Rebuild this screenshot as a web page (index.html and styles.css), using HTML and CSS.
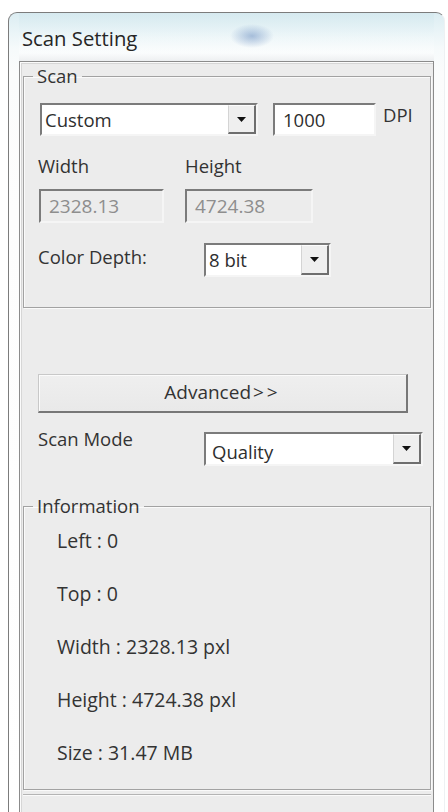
FILE: index.html
```html
<!DOCTYPE html>
<html lang="en">
<head>
<meta charset="utf-8">
<title>Scan Setting</title>
<link rel="stylesheet" href="styles.css">
</head>
<body>
<div class="window">
  <div class="titlebar"><span class="title">Scan Setting</span></div>
  <div class="client">
    <fieldset class="group scan">
      <legend>Scan</legend>
      <div class="row r-preset">
        <div class="combo c-preset">
          <span class="val">Custom</span>
          <span class="drop"><svg width="9" height="5" viewBox="0 0 9 5"><path d="M0 0h9L4.5 5z" fill="#111"/></svg></span>
        </div>
        <div class="field f-dpi">1000</div>
        <span class="unit">DPI</span>
      </div>
      <div class="row r-labels">
        <span class="lbl l-w">Width</span>
        <span class="lbl">Height</span>
      </div>
      <div class="row r-size">
        <div class="field disabled f-w">2328.13</div>
        <div class="field disabled f-h">4724.38</div>
      </div>
      <div class="row r-depth">
        <span class="lbl l-depth">Color Depth:</span>
        <div class="combo c-depth">
          <span class="val">8 bit</span>
          <span class="drop"><svg width="9" height="5" viewBox="0 0 9 5"><path d="M0 0h9L4.5 5z" fill="#111"/></svg></span>
        </div>
      </div>
    </fieldset>

    <button class="adv" type="button">Advanced<span class="chev">&gt;&gt;</span></button>

    <div class="row r-mode">
      <span class="lbl l-mode">Scan Mode</span>
      <div class="combo c-mode">
        <span class="val v-low">Quality</span>
        <span class="drop"><svg width="9" height="5" viewBox="0 0 9 5"><path d="M0 0h9L4.5 5z" fill="#111"/></svg></span>
      </div>
    </div>

    <fieldset class="group info">
      <legend>Information</legend>
      <ul class="info-list">
        <li>Left : 0</li>
        <li>Top : 0</li>
        <li>Width : 2328.13 pxl</li>
        <li>Height : 4724.38 pxl</li>
        <li>Size : 31.47 MB</li>
      </ul>
    </fieldset>
    <div class="next-group"></div>
  </div>
</div>
</body>
</html>
```
FILE: styles.css
```css
* { box-sizing: border-box; }

html, body {
  margin: 0;
  padding: 0;
  background: #ffffff;
  overflow: hidden;
}

body {
  font-family: "Open Sans", "Noto Sans", "DejaVu Sans", sans-serif;
  color: #333333;
  height: 812px;
}

.window {
  margin: 12px 0 0 8px;
  width: 437px;
  height: 800px;
  border: 1px solid #7c7c7c;
  border-right-color: #eef1f3;
  border-bottom: 0;
  border-radius: 9px 9px 0 0;
  padding: 0 10px 0 10px;
  background: linear-gradient(180deg, #dcedf2 0, #e9f4f7 18px, #f6fafb 36px, #fbfcfc 60px, #fdfdfd 200px, #ffffff 100%);
  display: flex;
  flex-direction: column;
}

.titlebar {
  height: 48px;
  flex: none;
  display: flex;
  align-items: center;
  padding: 2px 0 0 3px;
  background:
    radial-gradient(ellipse 22px 12px at 233px 23px, rgba(135,165,205,0.7), rgba(135,165,205,0) 100%),
    linear-gradient(180deg, rgba(210,232,238,0.6) 0, rgba(240,248,250,0.3) 24px, rgba(255,255,255,0.4) 40px, rgba(232,234,236,0.7) 100%);
}

.title {
  font-size: 20.3px;
  line-height: 24px;
  color: #262626;
}

.client {
  flex: 1;
  border: 1px solid #8b8b8b;
  border-bottom: 0;
  background: #ececec;
  box-shadow: inset 1px 1px 0 #fbfbfb, inset 2px 2px 0 #d6d6d6;
  padding: 3px 2px 0 3px;
  display: flex;
  flex-direction: column;
}

.group {
  margin: 0;
  border: 1px solid #a2a2a2;
  box-shadow: inset 1px 1px 0 #fafafa, 1px 1px 0 #fafafa;
  min-width: 0;
}

.group legend {
  font-size: 18.5px;
  line-height: 22px;
  padding: 0 4px;
  margin-left: -5px;
  color: #333333;
}

.scan {
  padding: 16px 8px 30px 14px;
}

.row {
  display: flex;
  align-items: center;
}

.lbl {
  font-size: 18.5px;
  line-height: 24px;
  color: #333333;
}

/* sunken frame used by fields and combos */
.field, .combo {
  border-top: 2px solid #7b7b7b;
  border-left: 2px solid #7b7b7b;
  border-right: 2px solid #f5f5f5;
  border-bottom: 2px solid #f5f5f5;
  background: #ffffff;
  font-size: 18.5px;
  color: #2e2e2e;
}

.field {
  display: flex;
  align-items: center;
  padding-left: 8px;
  line-height: 24px;
}

.combo {
  display: flex;
  align-items: stretch;
}

.combo .val {
  flex: 1;
  display: flex;
  align-items: center;
  padding-left: 3px;
  line-height: 24px;
}

.combo .v-low {
  padding-top: 6px;
  padding-left: 6px;
}

.drop {
  flex: none;
  width: 28px;
  display: flex;
  align-items: center;
  justify-content: center;
  background: #efefef;
  border-left: 1px solid #d4d4d4;
  border-top: 1px solid #fdfdfd;
  border-right: 2px solid #6e6e6e;
  border-bottom: 2px solid #6e6e6e;
}

.r-preset {
  margin-left: 2px;
  align-items: flex-start;
}

.c-preset {
  width: 218px;
  height: 33px;
}

.f-dpi {
  margin-left: 15px;
  width: 103px;
  height: 33px;
}

.unit {
  margin-left: 7px;
  font-size: 18.5px;
  line-height: 24px;
}

.r-labels {
  margin-top: 18px;
}

.l-w {
  width: 147px;
}

.r-size {
  margin-top: 11px;
  margin-left: 1px;
}

.field.disabled {
  background: #ececec;
  color: #8e8e8e;
  height: 34px;
  font-size: 19px;
}

.f-w { width: 125px; }
.f-h { width: 128px; margin-left: 21px; }

.r-depth {
  margin-top: 20px;
}

.l-depth {
  width: 166px;
  margin-top: -6px;
}

.c-depth {
  width: 127px;
  height: 34px;
}

.adv {
  margin: 66px 0 0 15px;
  width: 370px;
  height: 39px;
  font-family: inherit;
  font-size: 19px;
  color: #333333;
  background: linear-gradient(180deg, #efefef, #e9e9e9);
  border-top: 1px solid #c8c8c8;
  border-left: 1px solid #c8c8c8;
  border-right: 2px solid #777777;
  border-bottom: 2px solid #777777;
  box-shadow: inset 1px 1px 0 #fbfbfb;
  padding: 0 0 2px 0;
}

.chev {
  letter-spacing: 3px;
  margin-left: 2px;
}

.r-mode {
  margin: 19px 0 0 15px;
  align-items: flex-start;
}

.l-mode {
  width: 166px;
  margin-top: -5px;
}

.c-mode {
  width: 219px;
  height: 34px;
}

.info {
  margin-top: 29px;
  padding: 12px 8px 24px 14px;
}

.info-list {
  list-style: none;
  margin: 0;
  padding: 0 0 0 19px;
  display: flex;
  flex-direction: column;
  gap: 29px;
}

.info-list li {
  font-size: 19.5px;
  line-height: 24px;
  color: #333333;
}

.next-group {
  margin-top: 4px;
  border-top: 1px solid #b4b4b4;
  box-shadow: inset 0 1px 0 #fafafa;
  height: 20px;
}
```
